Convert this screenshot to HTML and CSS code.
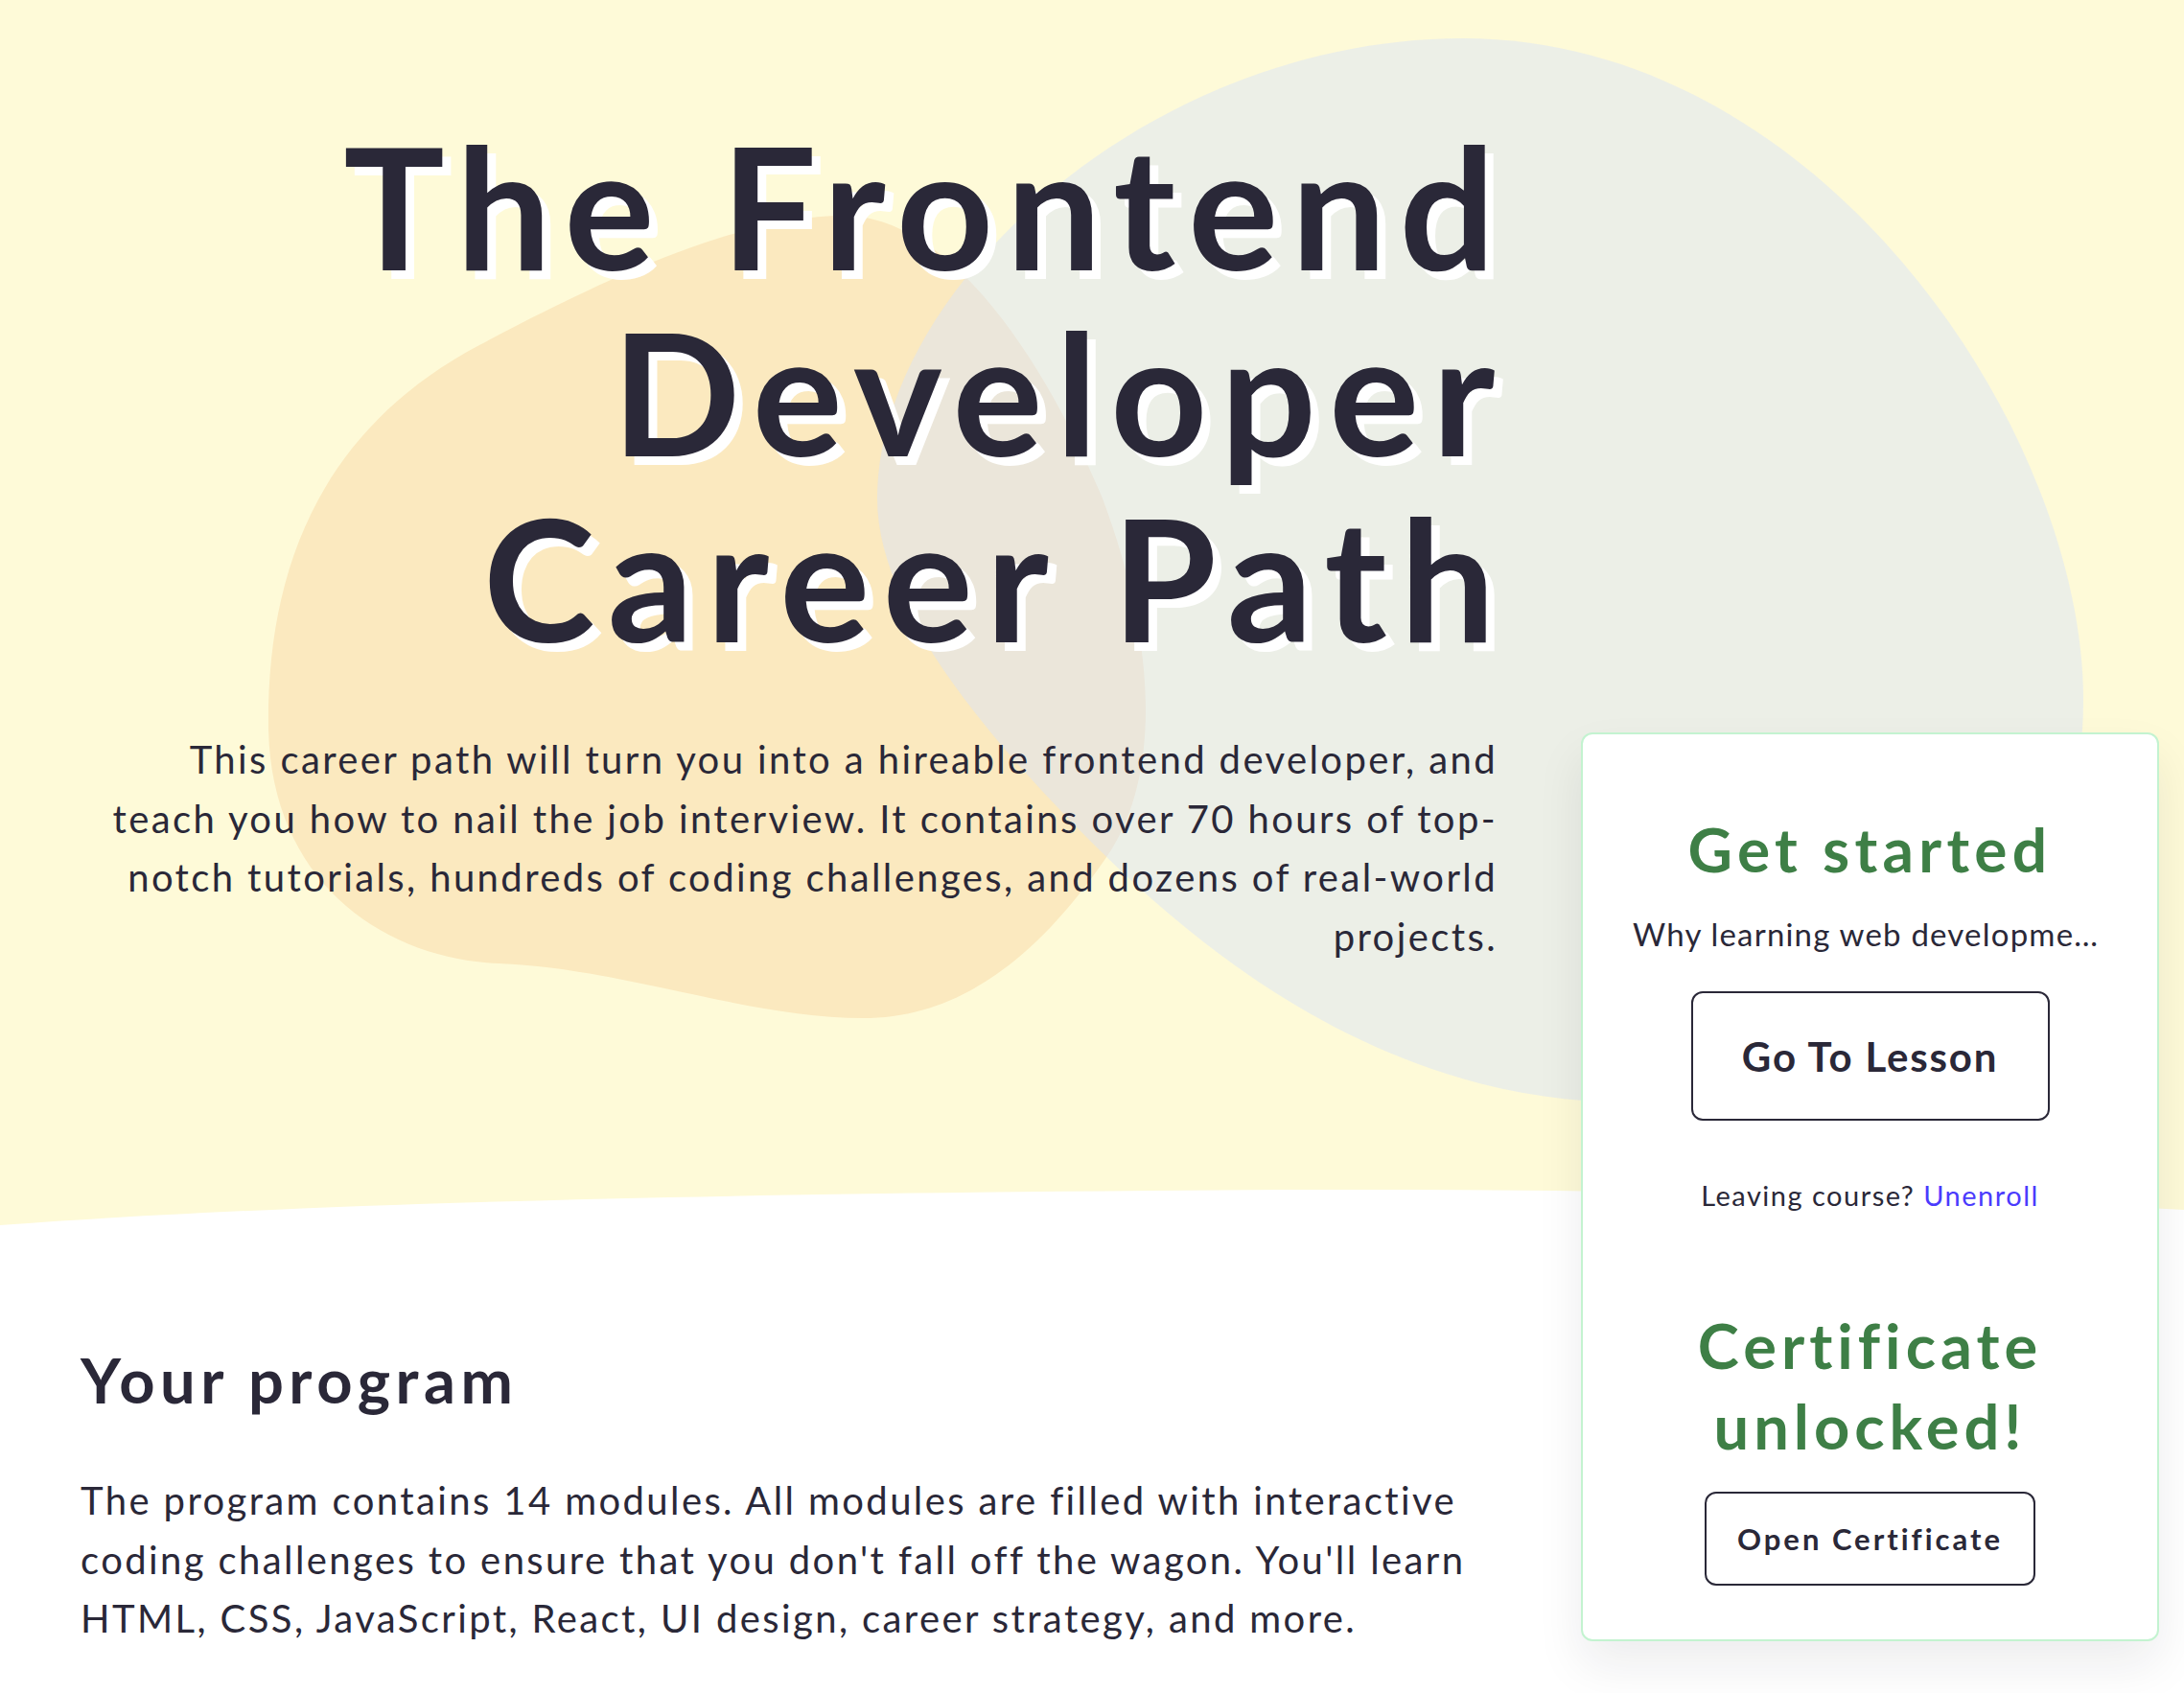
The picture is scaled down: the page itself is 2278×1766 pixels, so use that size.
FILE: index.html
```html
<!DOCTYPE html>
<html lang="en">
<head>
<meta charset="utf-8">
<title>The Frontend Developer Career Path</title>
<link rel="stylesheet" href="styles.css">
</head>
<body>
<div class="page">
  <svg class="backdrop" width="2278" height="1300" viewBox="0 0 2278 1300" aria-hidden="true">
    <path class="bg-yellow" d="M0,0 H2278 V1262 C2000,1246 1600,1238 1200,1242 C700,1246 300,1256 0,1278 Z"/>
    <path class="bg-orange" d="M880,225 C1000,225 1100,400 1150,520 C1210,680 1210,820 1150,900 C1080,1000 1000,1062 900,1062 C780,1062 650,1010 520,1005 C400,1000 283,920 280,760 C278,600 330,450 500,360 C650,280 780,225 880,225 Z"/>
    <path class="bg-grey" d="M1526,40 C1900,40 2173,450 2173,730 C2173,1000 1950,1150 1700,1150 C1450,1150 1260,1000 1140,880 C1000,740 915,620 915,520 C915,300 1200,40 1526,40 Z"/>
  </svg>

  <main class="layout">
    <div class="main-col">
      <h1 class="title">The Frontend Developer Career Path</h1>
      <p class="intro">This career path will turn you into a hireable frontend developer, and<br>teach you how to nail the job interview. It contains over 70 hours of top-<br>notch tutorials, hundreds of coding challenges, and dozens of real-world<br>projects.</p>

      <section class="program">
        <h2 class="program-title">Your program</h2>
        <p class="program-text">The program contains 14 modules. All modules are filled with interactive coding challenges to ensure that you don't fall off the wagon. You'll learn HTML, CSS, JavaScript, React, UI design, career strategy, and more.</p>
      </section>
    </div>

    <aside class="card">
      <h3 class="card-title">Get started</h3>
      <p class="lesson-name">Why learning web development is a great idea</p>
      <a class="btn btn-lesson" href="#">Go To Lesson</a>
      <p class="leave">Leaving course? <a class="unenroll" href="#">Unenroll</a></p>
      <h3 class="card-title cert-title">Certificate unlocked!</h3>
      <a class="btn btn-cert" href="#">Open Certificate</a>
    </aside>
  </main>
</div>
</body>
</html>
```

FILE: styles.css
```css
* { box-sizing: border-box; }

html, body {
  margin: 0;
  padding: 0;
  background: #ffffff;
}

body {
  font-family: "Lato", "Liberation Sans", sans-serif;
  color: #2a2838;
}

.page {
  position: relative;
  width: 2278px;
  min-height: 1766px;
  overflow: hidden;
}

.backdrop {
  position: absolute;
  top: 0;
  left: 0;
  z-index: 0;
}

.bg-yellow { fill: #fefad8; }
.bg-orange { fill: #fbe9bf; }
.bg-grey { fill: rgb(214, 226, 250); fill-opacity: 0.45; }

.layout {
  position: relative;
  z-index: 1;
  display: flex;
  align-items: flex-start;
  gap: 89px;
  padding: 0 26px 0 84px;
}

.main-col {
  width: 1476px;
  display: flex;
  flex-direction: column;
}

.title {
  margin: 117px -13px 0 0;
  font-size: 176px;
  line-height: 194px;
  font-weight: 700;
  letter-spacing: 13.5px;
  text-align: right;
  color: #2a2838;
  text-shadow: 9px 9px 0 #ffffff;
}

.intro {
  margin: 63px -2px 0 0;
  font-size: 40px;
  line-height: 61.5px;
  letter-spacing: 2.4px;
  text-align: right;
}

.program {
  padding-top: 392px;
  padding-bottom: 40px;
}

.program-title {
  margin: 0;
  font-size: 65px;
  line-height: 1.2;
  font-weight: 700;
  letter-spacing: 5.5px;
}

.program-text {
  margin: 57px 0 0 0;
  font-size: 40px;
  line-height: 61.5px;
  letter-spacing: 2.4px;
}

.card {
  width: 603px;
  margin-top: 764px;
  padding: 82px 52px 56px;
  background: #ffffff;
  border: 2px solid #c3f3d0;
  border-radius: 12px;
  box-shadow: 0 25px 50px rgba(30, 30, 40, 0.08);
  display: flex;
  flex-direction: column;
  align-items: center;
  text-align: center;
}

.card-title {
  margin: 0;
  font-size: 64px;
  line-height: 1.2;
  font-weight: 700;
  letter-spacing: 5.3px;
  color: #3e7f46;
}

.lesson-name {
  margin: 30px 0 0 0;
  width: 100%;
  font-size: 33px;
  line-height: 1.2;
  letter-spacing: 1.2px;
  white-space: nowrap;
  overflow: hidden;
  text-overflow: ellipsis;
}

.btn {
  display: flex;
  align-items: center;
  justify-content: center;
  border: 2px solid #2a2838;
  border-radius: 12px;
  color: #2a2838;
  text-decoration: none;
  font-weight: 700;
  line-height: 1.2;
}

.btn-lesson {
  margin-top: 40px;
  width: 374px;
  height: 135px;
  font-size: 42px;
  letter-spacing: 1.8px;
}

.leave {
  margin: 61px 0 0 0;
  font-size: 29px;
  line-height: 1.2;
  letter-spacing: 1.5px;
}

.unenroll {
  color: #4b3bfd;
  text-decoration: none;
}

.cert-title {
  margin-top: 96px;
  font-size: 65px;
  line-height: 84px;
  letter-spacing: 5px;
}

.btn-cert {
  margin-top: 27px;
  width: 345px;
  height: 98px;
  font-size: 31px;
  letter-spacing: 3px;
}
```
